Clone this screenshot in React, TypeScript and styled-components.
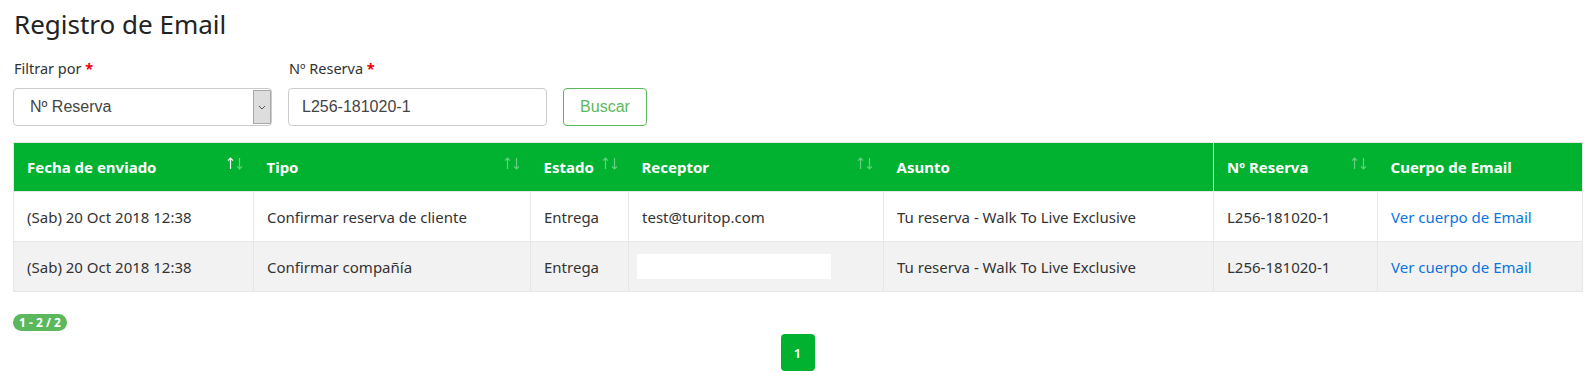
import React from 'react';
import styled, { createGlobalStyle } from 'styled-components';

const GlobalStyle = createGlobalStyle`
  body {
    margin: 0;
    background: #fff;
    font-family: 'Noto Sans', 'Segoe UI', sans-serif;
    color: #333;
  }
`;

const Page = styled.main`
  padding: 9px 9px 8px 13px;
`;

const Title = styled.h3`
  margin: 0 0 17px 1px;
  font-size: 26px;
  font-weight: 400;
  line-height: 1.2;
  color: #222;
`;

const FilterRow = styled.form`
  display: flex;
  align-items: flex-end;
  gap: 16px;
  margin-bottom: 16px;
`;

const Field = styled.div`
  display: flex;
  flex-direction: column;
  gap: 9px;
  width: 259px;
`;

const Label = styled.label`
  font-size: 14.5px;
  line-height: 22px;
  padding-left: 1px;
  color: #333;

  > b {
    color: #e00;
  }
`;

const SelectBox = styled.div`
  display: flex;
  height: 38px;
  box-sizing: border-box;
  border: 1px solid #ccc;
  border-radius: 4px;
  background: #fff;
  font-family: 'Liberation Sans', Arial, sans-serif;
  font-size: 16px;
  color: #444;
  overflow: hidden;
`;

const SelectValue = styled.span`
  flex: 1;
  display: flex;
  align-items: center;
  padding-left: 16px;
`;

const SelectArrow = styled.span`
  width: 16px;
  margin: 1px 0;
  background: #dddddd;
  border: 1px solid #a9a9a9;
  display: flex;
  align-items: center;
  justify-content: center;
`;

const TextInput = styled.input`
  height: 38px;
  box-sizing: border-box;
  border: 1px solid #ccc;
  border-radius: 4px;
  padding: 0 13px;
  font-family: 'Liberation Sans', Arial, sans-serif;
  font-size: 16px;
  color: #444;
`;

const SearchButton = styled.button`
  width: 84px;
  height: 38px;
  background: #fff;
  border: 1px solid #5cb85c;
  border-radius: 4px;
  color: #5cb85c;
  font-family: 'Liberation Sans', Arial, sans-serif;
  font-size: 16px;
  cursor: pointer;
`;

const Table = styled.table`
  width: 1569px;
  table-layout: fixed;
  border-collapse: collapse;
  border: 1px solid #e6e6e6;
  font-size: 15px;
`;

const HeadCell = styled.th<{ $divider?: boolean }>`
  height: 48px;
  padding: 0 11px 0 13px;
  background: #00b22f;
  color: #fff;
  font-weight: 700;
  text-align: left;
  border-left: ${p => (p.$divider ? '1px solid #dff3e3' : 'none')};
`;

const HeadInner = styled.div`
  display: flex;
  align-items: center;
  justify-content: space-between;

  > svg {
    margin-top: -8px;
  }
`;

const Row = styled.tr<{ $striped?: boolean }>`
  background: ${p => (p.$striped ? '#f2f2f2' : '#fff')};
`;

const Cell = styled.td`
  height: 49px;
  padding: 0 13px;
  border: 1px solid #e6e6e6;
  white-space: nowrap;
  overflow: hidden;
`;

const Redacted = styled.span`
  display: block;
  width: 194px;
  height: 25px;
  margin-left: -5px;
  background: #fff;
`;

const EmailLink = styled.a`
  color: #0a74e0;
  text-decoration: none;
`;

const Counter = styled.span`
  display: inline-block;
  margin-top: 22px;
  padding: 0 6px;
  height: 17px;
  line-height: 17px;
  border-radius: 9px;
  background: #5cb85c;
  color: #fff;
  font-size: 12px;
  font-weight: 700;
`;

const Pager = styled.nav`
  display: flex;
  justify-content: center;
  width: 1569px;
  margin-top: 2px;
`;

const PageButton = styled.span`
  width: 34px;
  height: 37px;
  display: flex;
  align-items: center;
  justify-content: center;
  border-radius: 4px;
  background: #00b22f;
  color: #fff;
  font-size: 13px;
  font-weight: 600;
`;

const SortIcon = ({ up = false }: { up?: boolean }) => (
  <svg width="16" height="13" viewBox="0 0 16 13" fill="none" strokeWidth="1.2">
    <g stroke={up ? '#fff' : 'rgba(255,255,255,0.4)'}>
      <path d="M3.5 12V1.2M1 3.6l2.5-2.5L6 3.6" />
    </g>
    <g stroke="rgba(255,255,255,0.4)">
      <path d="M12.5 1v10.8M10 9.4l2.5 2.5 2.5-2.5" />
    </g>
  </svg>
);

const columns = [
  { title: 'Fecha de enviado', width: 240, sort: true, active: true },
  { title: 'Tipo', width: 277, sort: true },
  { title: 'Estado', width: 98, sort: true },
  { title: 'Receptor', width: 255, sort: true },
  { title: 'Asunto', width: 330 },
  { title: 'Nº Reserva', width: 164, sort: true, divider: true },
  { title: 'Cuerpo de Email', width: 205 },
];

const emails = [
  { date: '(Sab) 20 Oct 2018 12:38', type: 'Confirmar reserva de cliente', to: 'test@turitop.com' },
  { date: '(Sab) 20 Oct 2018 12:38', type: 'Confirmar compañía', to: '' },
];

export default function App() {
  return (
    <Page>
      <GlobalStyle />
      <Title>Registro de Email</Title>
      <FilterRow onSubmit={e => e.preventDefault()}>
        <Field>
          <Label>Filtrar por <b>*</b></Label>
          <SelectBox>
            <SelectValue>Nº Reserva</SelectValue>
            <SelectArrow>
              <svg width="8" height="5" viewBox="0 0 8 5">
                <path d="M1 1l3 3 3-3" stroke="#555" fill="none" />
              </svg>
            </SelectArrow>
          </SelectBox>
        </Field>
        <Field>
          <Label>Nº Reserva <b>*</b></Label>
          <TextInput defaultValue="L256-181020-1" />
        </Field>
        <SearchButton type="submit">Buscar</SearchButton>
      </FilterRow>

      <Table>
        <colgroup>
          {columns.map(c => (
            <col key={c.title} style={{ width: c.width }} />
          ))}
        </colgroup>
        <thead>
          <tr>
            {columns.map(c => (
              <HeadCell key={c.title} $divider={c.divider}>
                <HeadInner>
                  <span>{c.title}</span>
                  {c.sort && <SortIcon up={c.active} />}
                </HeadInner>
              </HeadCell>
            ))}
          </tr>
        </thead>
        <tbody>
          {emails.map((m, i) => (
            <Row key={i} $striped={i % 2 === 1}>
              <Cell>{m.date}</Cell>
              <Cell>{m.type}</Cell>
              <Cell>Entrega</Cell>
              <Cell>{m.to || <Redacted />}</Cell>
              <Cell>Tu reserva - Walk To Live Exclusive</Cell>
              <Cell>L256-181020-1</Cell>
              <Cell>
                <EmailLink href="#">Ver cuerpo de Email</EmailLink>
              </Cell>
            </Row>
          ))}
        </tbody>
      </Table>

      <Counter>1 - 2 / 2</Counter>
      <Pager>
        <PageButton>1</PageButton>
      </Pager>
    </Page>
  );
}
